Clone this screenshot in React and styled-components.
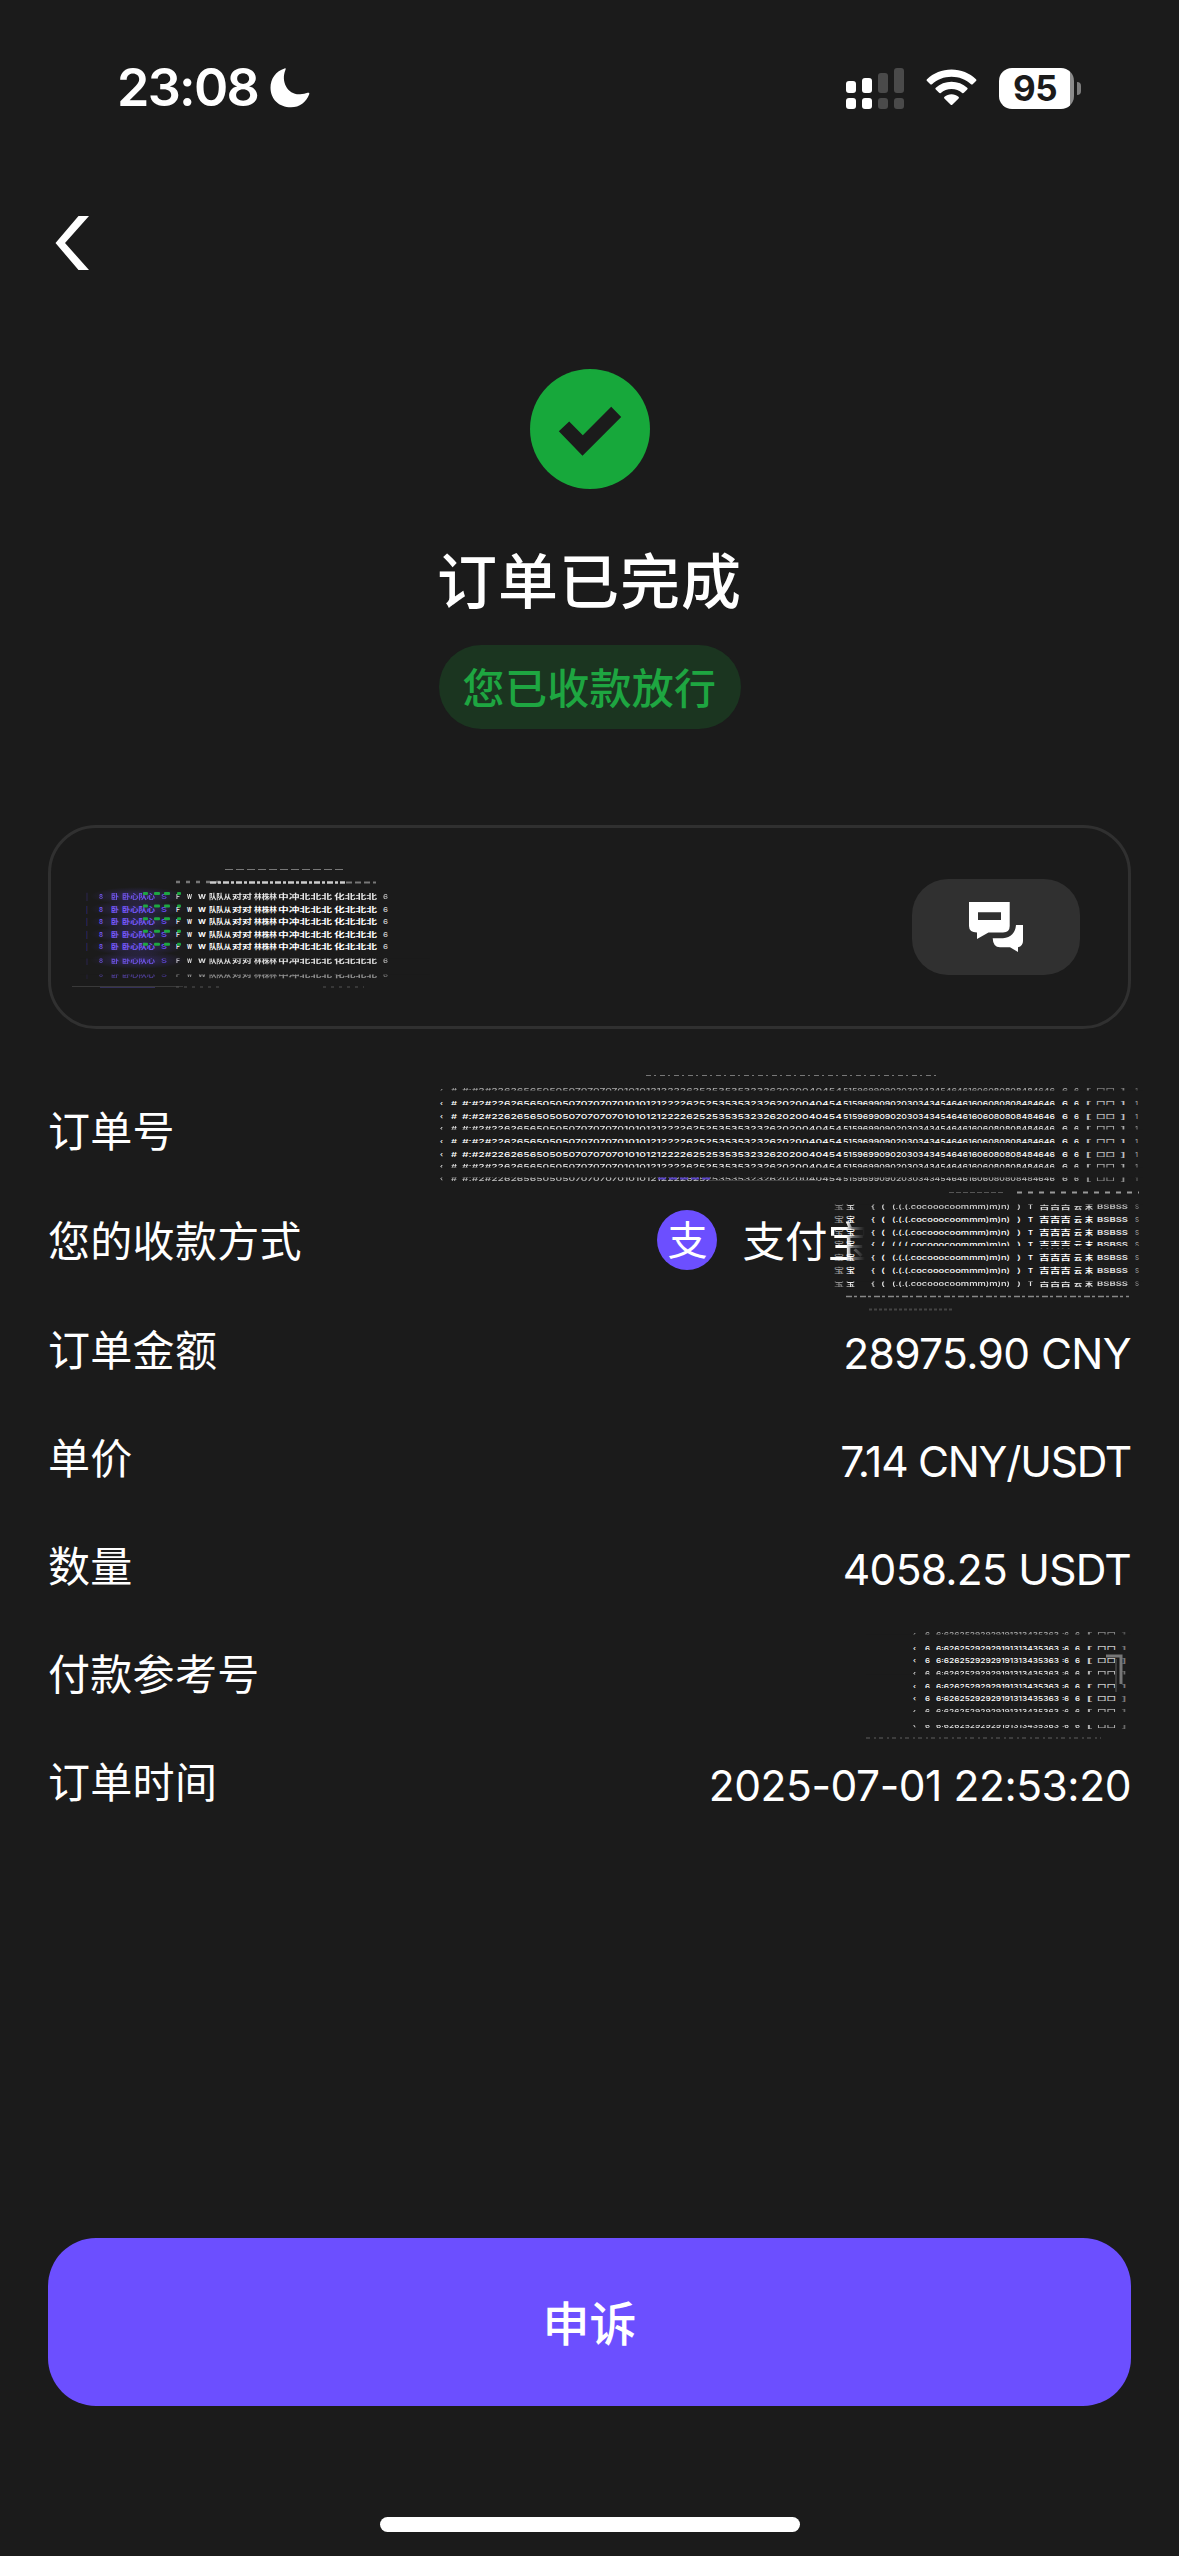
import React from "react";
import styled, { createGlobalStyle } from "styled-components";

const GlobalStyle = createGlobalStyle`
  * {
    box-sizing: border-box;
  }

  body {
    margin: 0;
    background: #1b1b1b;
    color: #fff;
    font-family: Inter, "Noto Sans CJK SC", sans-serif;
  }
`;

const StyledPage = styled.div`
  display: flex;
  flex-direction: column;
  width: 1179px;
  height: 2556px;
  padding: 0 48px 24px;
  overflow: hidden;
`;

/* Status bar */

const StyledStatusBar = styled.div`
  display: flex;
  align-items: center;
  justify-content: space-between;
  height: 176px;
  padding: 0 50px 0 69px;
`;

const StatusGroup = styled.div`
  display: flex;
  align-items: center;
  gap: ${({ $gap }) => $gap}px;
`;

const Time = styled.span`
  font-size: 52px;
  font-weight: 600;
  line-height: 1;
  letter-spacing: -1.7px;
`;

const Battery = styled.div`
  display: flex;
  align-items: center;
  gap: 3px;
`;

const BatteryBody = styled.div`
  display: flex;
  align-items: center;
  justify-content: center;
  width: 75px;
  height: 41px;
  border-radius: 13px;
  background: linear-gradient(to right, #fff 71px, #8c8c8c 71px);
  color: #1b1b1b;
  font-size: 35px;
  font-weight: 700;
  letter-spacing: -0.5px;
  padding-right: 3px;
`;

const BatteryTip = styled.div`
  width: 4px;
  height: 13px;
  border-radius: 0 5px 5px 0;
  background: #7d7d7d;
`;

function StatusBar() {
  return (
    <StyledStatusBar>
      <StatusGroup $gap={12}>
        <Time>23:08</Time>
        <svg width="40" height="40" viewBox="0 0 40 40">
          <path
            d="M14.6 .4C15.7 .1 16 .8 15.4 2C10.500 14 18 27 30 26.300C33 26.200 35.500 25.500 37.500 24.800C39 24.300 39.700 25 39.200 26.200C36.500 34 29.500 39.300 21 39.300C9 39.300 .5 31 .5 19.700C.5 10.500 6 3 14.600 .4Z"
            fill="#fff"
          />
        </svg>
      </StatusGroup>
      <StatusGroup $gap={22}>
        <svg width="58" height="41" viewBox="0 0 58 41">
          <g fill="#fff">
            <rect x="0" y="13" width="10" height="12" rx="3" />
            <rect x="16" y="10" width="10" height="15" rx="3" />
            <rect x="0" y="30" width="10" height="11" rx="3" />
            <rect x="16" y="30" width="10" height="11" rx="3" />
          </g>
          <g fill="#4a4a4a">
            <rect x="32" y="5" width="10" height="20" rx="3" />
            <rect x="48" y="0" width="10" height="25" rx="3" />
            <rect x="32" y="30" width="10" height="11" rx="3" />
            <rect x="48" y="30" width="10" height="11" rx="3" />
          </g>
        </svg>
        <svg width="51" height="38" viewBox="0 0 51 38" fill="#fff">
          <path d="M25.500 .5C35 .5 43.500 4 50 10.200C50.600 10.800 50.600 11.400 50 12L46.700 15.200C46.200 15.700 45.500 15.700 45 15.200C39.700 10.400 33 7.700 25.500 7.700S11.300 10.400 6 15.200C5.500 15.700 4.800 15.700 4.300 15.200L1 12C.4 11.400 .4 10.800 1 10.200C7.500 4 16 .5 25.500 .5Z" />
          <path d="M25.500 12.800C31.500 12.800 37 15 41.200 18.800C41.800 19.400 41.800 20 41.200 20.600L37.900 23.800C37.400 24.300 36.700 24.300 36.200 23.900C33.300 21.400 29.600 19.900 25.500 19.900S17.700 21.400 14.800 23.900C14.300 24.300 13.600 24.300 13.100 23.800L9.800 20.600C9.200 20 9.200 19.400 9.800 18.800C14 15 19.500 12.800 25.500 12.800Z" />
          <path d="M25.500 25.200C28.200 25.200 30.600 26.100 32.500 27.700C33.100 28.200 33.100 28.800 32.600 29.400L26.500 35.400C25.800 36.100 25.200 36.100 24.500 35.400L18.400 29.400C17.900 28.800 17.900 28.200 18.500 27.700C20.400 26.100 22.800 25.200 25.500 25.200Z" />
        </svg>
        <Battery>
          <BatteryBody>95</BatteryBody>
          <BatteryTip />
        </Battery>
      </StatusGroup>
    </StyledStatusBar>
  );
}

const NavBar = styled.nav`
  display: flex;
  align-items: center;
  height: 134px;
  padding-left: 7px;
`;

/* Order state */

const Hero = styled.header`
  display: flex;
  flex-direction: column;
  align-items: center;
  padding-top: 59px;
`;

const Title = styled.h1`
  margin: 51px 0 0;
  font-size: 60px;
  font-weight: 500;
  line-height: 84px;
  letter-spacing: 1px;
`;

const StatePill = styled.div`
  display: flex;
  align-items: center;
  justify-content: center;
  width: 302px;
  height: 84px;
  margin-top: 21px;
  padding-bottom: 4px;
  border-radius: 42px;
  background: #1b3520;
  color: #1ea641;
  font-size: 42px;
  font-weight: 500;
  letter-spacing: 0.3px;
`;

/* Counterparty */

const Card = styled.section`
  display: flex;
  align-items: center;
  justify-content: space-between;
  height: 204px;
  margin-top: 96px;
  padding: 0 48px 0 29px;
  border: 3px solid #303030;
  border-radius: 48px;
`;

const ChatButton = styled.button`
  display: flex;
  align-items: center;
  justify-content: center;
  width: 168px;
  height: 96px;
  border: 0;
  border-radius: 36px;
  background: #303030;
`;

/* Order details */

const Details = styled.dl`
  display: flex;
  flex-direction: column;
  gap: 51px;
  margin: 73px 0 0;
`;

const Row = styled.div`
  display: flex;
  align-items: center;
  justify-content: space-between;
  height: ${({ $tall }) => ($tall ? 60 : 57)}px;
`;

const Label = styled.dt`
  padding-top: 2px;
  font-size: 42px;
  line-height: 57px;
  letter-spacing: 0.3px;
`;

const Value = styled.dd`
  display: flex;
  align-items: center;
  margin: 0;
  font-size: 42.500px;
  line-height: 57px;
  letter-spacing: ${({ $spacing = 0 }) => $spacing}px;
  padding-top: ${({ $drop = 0 }) => $drop}px;
`;

const PayBadge = styled.span`
  display: flex;
  align-items: center;
  justify-content: center;
  width: 60px;
  height: 60px;
  margin-right: 25px;
  border-radius: 50%;
  background: #6c4fff;
  font-size: 40px;
`;

const PayName = styled.span`
  padding-top: 3px;
`;

const FadedChar = styled.span`
  display: inline-block;
  mask-image: linear-gradient(to right, #000 45%, rgba(0, 0, 0, 0.35) 60%, transparent 88%);
`;

const MosaicSvg = styled.svg`
  flex: none;
  overflow: visible;
  margin-left: ${({ $left = 0 }) => $left}px;
  margin-right: ${({ $right = 0 }) => $right}px;
`;

// One squashed line of a hidden value. cut > 0 hides the feet, cut < 0 the heads
function Slice({ y, cut = 0, opacity = 1, width, parts }) {
  return (
    <g opacity={opacity}>
      {parts.map(({ x, width: length, text, fill = "#fff", weight = 500 }) => (
        <text
          key={x}
          x={x}
          y={y + 2.500}
          textLength={length}
          lengthAdjust="spacingAndGlyphs"
          fontSize="6.800"
          fontWeight={weight}
          fill={fill}
        >
          {text}
        </text>
      ))}
      {cut > 0 && <rect x="0" y={y + 3 - cut} width={width} height={cut + 1} fill="#1b1b1b" />}
      {cut < 0 && <rect x="0" y={y - 4} width={width} height={1.500 - cut} fill="#1b1b1b" />}
    </g>
  );
}

function Mosaic({ width, height, slices, parts, left, right, children }) {
  return (
    <MosaicSvg width={width} height={height} $left={left} $right={right} aria-hidden="true">
      {slices.map(([y, cut, opacity]) => (
        <Slice key={y} y={y} cut={cut} opacity={opacity} width={width} parts={parts} />
      ))}
      {children}
    </MosaicSvg>
  );
}

const userParts = [
  { x: 6, width: 2, text: "|", fill: "#3b2f80" },
  { x: 19, width: 4, text: "8", fill: "#7a5cff" },
  { x: 31, width: 8, text: "卧", fill: "#7a5cff", weight: 700 },
  { x: 42, width: 33, text: "卧心队心", fill: "#7a5cff", weight: 700 },
  { x: 81, width: 6, text: "S", fill: "#6c4fff" },
  { x: 96, width: 4, text: "F" },
  { x: 107, width: 5, text: "W", weight: 700 },
  { x: 118, width: 8, text: "W", weight: 700 },
  { x: 129, width: 22, text: "队队从", weight: 700 },
  { x: 152, width: 20, text: "对对", weight: 700 },
  { x: 174, width: 23, text: "林株林", weight: 700 },
  { x: 198, width: 54, text: "中冲北北北", weight: 700 },
  { x: 254, width: 43, text: "化北北北", weight: 700 },
  { x: 303, width: 5, text: "6", fill: "#ccc" },
];

function UserMosaic() {
  return (
    <Mosaic
      width={350}
      height={140}
      parts={userParts}
      slices={[
        [39, 0, 0.9],
        [52, 0, 1],
        [64.700, 0, 1],
        [77, 0, 1],
        [89.700, 0, 1],
        [103, -1, 0.85],
        [117, -3, 0.5],
      ]}
    >
      <defs>
        <radialGradient id="glow">
          <stop offset="0" stopColor="#6c4fff" stopOpacity="0.28" />
          <stop offset="1" stopColor="#6c4fff" stopOpacity="0" />
        </radialGradient>
      </defs>
      {[39, 52, 64.700, 77, 89.700, 103].map((y) => (
        <ellipse key={y} cx="58" cy={y} rx="48" ry="9" fill="url(#glow)" />
      ))}
      {[36.500, 49, 61.700, 74.300, 87.300].map((y) => (
        <g key={y} fill="#1ea641">
          <rect x="63" y={y - 1.500} width="5" height="3" rx="1" />
          <rect x="74" y={y - 1.500} width="6" height="3" rx="1" />
          <rect x="84" y={y - 1.500} width="6" height="3" rx="1" />
          <rect x="97" y={y - 1.500} width="4" height="3" rx="1" />
        </g>
      ))}
      <path d="M145 12.500H263" stroke="#777" strokeDasharray="8 3" />
      <path d="M96 25H140" stroke="#777" strokeWidth="2.500" strokeDasharray="4 6" />
      <path d="M130 25.500H265" stroke="#ccc" strokeWidth="2.500" strokeDasharray="6 2 3 2" />
      <path d="M266 25.500H296" stroke="#777" strokeWidth="2" strokeDasharray="6 3" />
      <path d="M-8 129.500H103" stroke="#393939" />
      <path d="M20 130.500H75" stroke="#34305a" />
      <path d="M96 130H140M243 130H284" stroke="#555" strokeDasharray="3 5" />
    </Mosaic>
  );
}

const orderParts = [
  { x: 2, width: 3, text: "‹" },
  { x: 13, width: 6, text: "#" },
  {
    x: 24,
    width: 380,
    text: "#:#2#22626565050507070707010101212222625253535323262020040454",
  },
  {
    x: 405,
    width: 212,
    text: "515969909020303434546461606080808484646",
  },
  { x: 624, width: 6, text: "6" },
  { x: 636, width: 5, text: "6" },
  { x: 647, width: 7, text: "[", fill: "#bbb" },
  { x: 658, width: 19, text: "□□", fill: "#bbb" },
  { x: 682, width: 6, text: "]", fill: "#bbb" },
  { x: 697, width: 3, text: "1", fill: "#999" },
];

function OrderMosaic() {
  return (
    <Mosaic
      width={705}
      height={116}
      right={-12}
      parts={orderParts}
      slices={[
        [17, 2.500, 0.6],
        [30, 1, 1],
        [43, 0, 1],
        [55, 1.500, 0.9],
        [68, 1, 1],
        [81, 0, 1],
        [93, 1.500, 0.9],
        [105, -2, 0.7],
      ]}
    >
      <path d="M208 2.500H500" stroke="#777" strokeDasharray="5 3 2 4" />
      <path d="M220 105.500H272" stroke="#5a45c8" strokeWidth="2" strokeDasharray="8 3" />
      <path d="M270 107.500H380" stroke="#444" />
    </Mosaic>
  );
}

const payParts = [
  { x: 5, width: 10, text: "宝", fill: "#999" },
  { x: 17, width: 9, text: "宝" },
  { x: 42, width: 4, text: "{" },
  { x: 52, width: 4, text: "(" },
  { x: 63, width: 118, text: "(.(.(.cocooocoommm)m)n)" },
  { x: 188, width: 4, text: ")" },
  { x: 199, width: 5, text: "T", weight: 700 },
  { x: 210, width: 32, text: "吉吉吉", weight: 700 },
  { x: 245, width: 8, text: "云", weight: 700 },
  { x: 256, width: 8, text: "末", weight: 700 },
  { x: 268, width: 31, text: "BSBSS", weight: 700, fill: "#ddd" },
  { x: 306, width: 4, text: "S", fill: "#999" },
];

function PayMosaic() {
  return (
    <Mosaic
      width={314}
      height={130}
      left={-41}
      right={-12}
      parts={payParts}
      slices={[
        [31, -1, 0.8],
        [44, 0, 1],
        [57, 0, 1],
        [69, 1, 1],
        [82, 0, 1],
        [95, 0, 1],
        [108, -1, 0.9],
      ]}
    >
      <path d="M120 17.500H175" stroke="#555" strokeDasharray="5 2" />
      <path d="M188 17.500H310" stroke="#999" strokeWidth="2" strokeDasharray="5 6" />
      <path d="M17 121.500H300" stroke="#888" strokeWidth="1.500" strokeDasharray="6 2 3 3" />
      <path d="M40 134.500H125" stroke="#444" strokeWidth="2" strokeDasharray="3 2" />
    </Mosaic>
  );
}

const refParts = [
  { x: 47, width: 3, text: "‹" },
  { x: 59, width: 5, text: "6" },
  { x: 70, width: 123, text: "6:62625292929191313435363" },
  { x: 196, width: 7, text: ":6" },
  { x: 209, width: 5, text: "6" },
  { x: 220, width: 7, text: "[", fill: "#ccc" },
  { x: 231, width: 19, text: "□□", fill: "#ccc" },
  { x: 255, width: 6, text: "]", fill: "#777" },
];

function ReferenceMosaic() {
  return (
    <Mosaic
      width={265}
      height={136}
      right={0}
      parts={refParts}
      slices={[
        [28, 2.500, 0.6],
        [42, 1, 1],
        [54, 0, 1],
        [67, 1.500, 0.9],
        [80, 1, 1],
        [92, 0, 1],
        [105, 2, 0.85],
        [119, -2.500, 0.85],
      ]}
    >
      <path d="M240 50H255V78" fill="none" stroke="#777" strokeWidth="3" />
      <path d="M250 53V86" stroke="#3c3c3c" strokeWidth="2" />
      <path d="M0 132H235" stroke="#4a4a4a" strokeWidth="1.500" strokeDasharray="4 4 2 3" />
    </Mosaic>
  );
}

function OrderDetails() {
  return (
    <Details>
      <Row>
        <Label>订单号</Label>
        <Value>
          <OrderMosaic />
        </Value>
      </Row>
      <Row $tall>
        <Label>您的收款方式</Label>
        <Value>
          <PayBadge>支</PayBadge>
          <PayName>
            支付<FadedChar>宝</FadedChar>
          </PayName>
          <PayMosaic />
        </Value>
      </Row>
      <Row>
        <Label>订单金额</Label>
        <Value $drop={7} $spacing={-0.6}>
          28975.90 CNY
        </Value>
      </Row>
      <Row>
        <Label>单价</Label>
        <Value $drop={7} $spacing={-1.25}>
          7.14 CNY/USDT
        </Value>
      </Row>
      <Row>
        <Label>数量</Label>
        <Value $drop={7} $spacing={-0.75}>
          4058.25 USDT
        </Value>
      </Row>
      <Row>
        <Label>付款参考号</Label>
        <Value>
          <ReferenceMosaic />
        </Value>
      </Row>
      <Row>
        <Label>订单时间</Label>
        <Value $drop={7} $spacing={-0.45}>
          2025-07-01 22:53:20
        </Value>
      </Row>
    </Details>
  );
}

const AppealButton = styled.button`
  height: 168px;
  flex: none;
  margin-top: auto;
  padding: 0 0 3px;
  border: 0;
  border-radius: 48px;
  background: #6c4fff;
  color: #fff;
  font-family: inherit;
  font-size: 47px;
  font-weight: 500;
`;

const HomeIndicator = styled.div`
  align-self: center;
  flex: none;
  width: 420px;
  height: 15px;
  margin-top: 111px;
  border-radius: 8px;
  background: #fff;
`;

export default function App() {
  return (
    <StyledPage>
      <GlobalStyle />
      <StatusBar />
      <NavBar>
        <svg width="34" height="54" viewBox="0 0 34 54">
          <path d="M23.500 0H34L10 27L34 54H23.500L.5 27Z" fill="#fff" />
        </svg>
      </NavBar>
      <Hero>
        <svg width="120" height="120" viewBox="0 0 120 120">
          <circle cx="60" cy="60" r="60" fill="#17a83b" />
          <path
            d="M28.800 62.300L39.200 52.500L52.800 66.300L81.200 37.700L91.200 48L52.500 86.700Z"
            fill="#1b1b1b"
          />
        </svg>
        <Title>订单已完成</Title>
        <StatePill>您已收款放行</StatePill>
      </Hero>
      <Card>
        <UserMosaic />
        <ChatButton aria-label="chat">
          <svg width="54" height="50" viewBox="0 0 54 50" fill="#fff">
            <path
              fillRule="evenodd"
              d="M0 0H40.700V24Q40.700 30.500 34 30.500H19.500L8 37V30.500Q0 30.500 0 24ZM9 10.300V18H32V10.300Z"
            />
            <path d="M47 23H54V39Q54 44 49 45.300V50L41 45.300H31Q24 45.300 23.700 36.300H34Q46 35 47 23Z" />
          </svg>
        </ChatButton>
      </Card>
      <OrderDetails />
      <AppealButton>申诉</AppealButton>
      <HomeIndicator />
    </StyledPage>
  );
}
